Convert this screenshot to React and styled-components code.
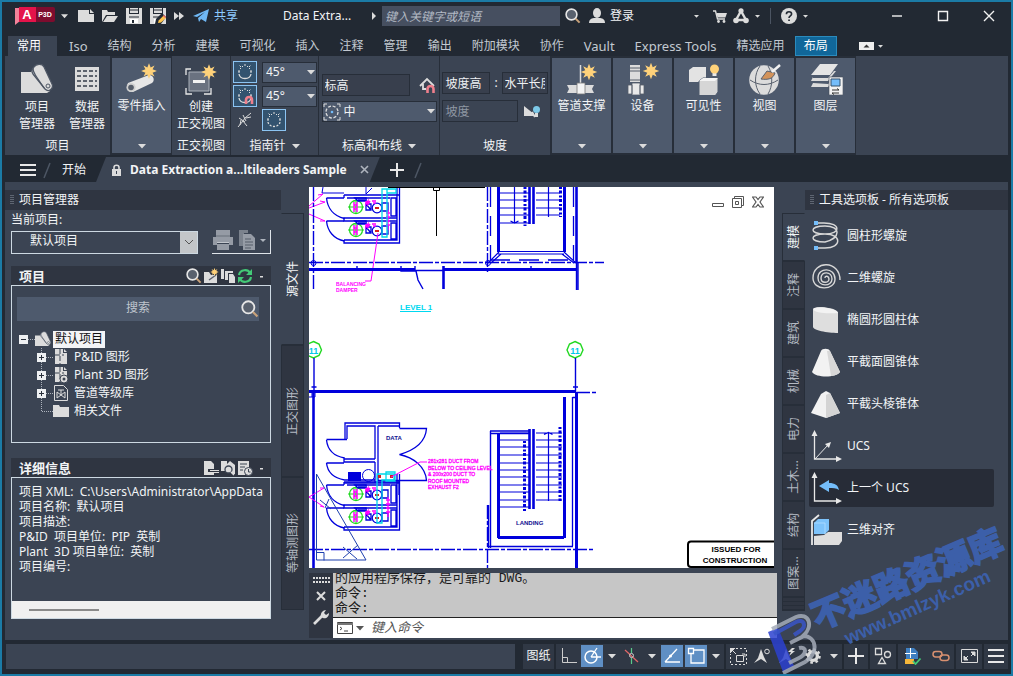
import React from 'react';
import styled, { createGlobalStyle, css } from 'styled-components';

const c = {
  edge: '#1b7ba6',
  dark: '#222933',
  panel: '#3b4453',
  head: '#2f3541',
  light: '#4e5a6d',
  line: '#272e39',
  text: '#f2f4f6',
  dim: '#c3c9d1',
  frame: '#cdd9e2',
  blue: '#5f8fc4',
};

const GlobalStyle = createGlobalStyle`
  * { box-sizing: border-box; }
  body {
    margin: 0;
    background: ${c.dark};
    color: ${c.text};
    font: 12px/16px 'Noto Sans', 'Noto Sans CJK SC', sans-serif;
  }
  button, input, select { font: inherit; color: inherit; margin: 0; border-radius: 0; }
  ul { list-style: none; margin: 0; padding: 0; }
  svg { display: block; flex: none; }
`;

const Frame = styled.div`
  position: relative;
  display: flex;
  flex-direction: column;
  min-height: 100vh;
  padding: 0 3px;
  border: 2px solid ${c.edge};
  overflow: hidden;
`;

const PlainButton = styled.button`
  display: flex;
  align-items: center;
  justify-content: center;
  flex: none;
  padding: 0;
  border: 0;
  background: none;
  white-space: nowrap;
  cursor: pointer;
`;

/* ---------- title bar ---------- */
const TitleBar = styled.header`
  display: flex;
  align-items: center;
  height: 34px;
  padding: 0 13px 6px 10px;
`;
const QuickTools = styled.div`
  display: flex;
  align-items: center;
  gap: 8px;
`;
const LogoButton = styled(PlainButton)`
  gap: 6px;
  margin-right: 10px;
`;
const ShareButton = styled(PlainButton)`
  gap: 5px;
  margin-left: 9px;
  color: #8ecbff;
`;
const FileName = styled.span`
  width: 89px;
  margin-left: 45px;
  white-space: nowrap;
`;
const TitleSearch = styled.input`
  flex: 0 1 178px;
  min-width: 60px;
  height: 20px;
  margin: 0 5px;
  padding: 0 3px;
  border: 0;
  background: #464f60;
  &::placeholder { color: #b3bac5; opacity: 1; font-style: italic; }
`;
const LoginButton = styled(PlainButton)`
  gap: 5px;
  margin-left: 8px;
`;
const TitleEnd = styled.div`
  display: flex;
  align-items: center;
  flex: 1;
  gap: 6px;
  padding-left: 60px;
`;
const TitleRule = styled.span`
  width: 1px;
  height: 16px;
  margin: 0 4px;
  background: #4b5462;
`;
const WindowButtons = styled.div`
  display: flex;
  gap: 34px;
  margin-left: auto;
`;

/* ---------- ribbon tabs ---------- */
const RibbonTabs = styled.nav`
  display: flex;
  height: 20px;
  padding-left: 3px;
`;
const RibbonTab = styled(PlainButton)`
  padding: 0 10px;
  color: ${c.dim};
  ${(p) => p.$latin && css`font-size: 13px;`}
  ${(p) => p.$kind === 'current' && css`
    margin-right: 2px;
    padding: 0 16px 0 9px;
    color: #fff;
    background: ${c.panel};
  `}
  ${(p) => p.$kind === 'accent' && css`
    margin-right: 22px;
    padding: 0 8px;
    color: #fff;
    background: #11679a;
    border: 1px solid #2b8bbd;
  `}
`;
const CollapseButton = styled(PlainButton)`gap: 4px;`;

/* ---------- ribbon ---------- */
const Ribbon = styled.section`
  display: flex;
  height: 99px;
  background: ${c.panel};
`;
const Panel = styled.section`
  display: flex;
  flex-direction: column;
  flex: none;
  width: ${(p) => p.$width}px;
  border-right: 1px solid ${c.line};
`;
const PanelBody = styled.div`
  display: flex;
  flex: 1;
  justify-content: center;
  gap: ${(p) => p.$gap || 0}px;
  padding: ${(p) => p.$pad || '7px 0 0'};
`;
const PanelTitle = styled.h2`
  display: flex;
  align-items: center;
  justify-content: center;
  gap: 6px;
  height: 18px;
  margin: 0;
  font-size: 12px;
  font-weight: 400;
`;
const BigButton = styled(PlainButton)`
  flex-direction: column;
  justify-content: flex-start;
  line-height: 17px;
  svg { margin-bottom: 3px; }
`;
const SlidePanel = styled(PlainButton)`
  flex-direction: column;
  justify-content: flex-start;
  width: 61px;
  padding: 5px 0 4px;
  background: ${c.light};
  border: 1px solid ${c.line};
  border-width: 2px 1px;
  span { flex: 1; padding-top: 3px; }
`;
const Stack = styled.div`
  display: flex;
  flex-direction: column;
  gap: ${(p) => p.$gap || 0}px;
  padding: ${(p) => p.$pad || '0'};
`;
const FieldRow = styled.div`
  display: flex;
  align-items: center;
  gap: ${(p) => p.$gap || 0}px;
`;
const ToggleButton = styled(PlainButton)`
  width: 24px;
  height: 22px;
  ${(p) => p.$on && css`
    background: #33536f;
    border: 1px solid #8cc4f2;
  `}
`;
const PickerBox = styled.span`
  position: relative;
  display: flex;
  align-items: center;
  width: ${(p) => p.$width}px;
  height: 21px;
  background: ${c.light};
  border: 1px solid ${c.line};
  > svg:last-child { position: absolute; right: 1px; pointer-events: none; }
`;
const PickerSelect = styled.select`
  flex: 1;
  min-width: 0;
  height: 100%;
  padding: 0 3px;
  border: 0;
  background: transparent;
  appearance: none;
  option { color: #000; }
`;
const RibbonInput = styled.input`
  width: ${(p) => p.$width}px;
  height: 22px;
  padding: 0 2px;
  border: 1px solid ${c.line};
  background: #383f4d;
  &::placeholder { color: #eef0f3; opacity: 1; }
  &:disabled { background: ${c.panel}; }
  &:disabled::placeholder { color: #8f97a3; }
`;

/* ---------- document tabs ---------- */
const DocTabs = styled.nav`
  display: flex;
  align-items: center;
  height: 27px;
  padding: 2px 0 0 15px;
`;
const StartTab = styled(PlainButton)`margin: 0 10px 0 8px;`;
const ActiveDoc = styled.div`
  display: flex;
  align-items: center;
  align-self: stretch;
  gap: 9px;
  padding: 0 11px 0 16px;
  margin-right: 10px;
  background: ${c.panel};
  font-weight: 700;
  white-space: nowrap;
  clip-path: polygon(10px 0, 100% 0, calc(100% - 10px) 100%, 0 100%);
  button { margin-left: 4px; }
`;
const NewDoc = styled(PlainButton)`margin-right: 9px;`;

/* ---------- workspace ---------- */
const Workspace = styled.main`
  display: grid;
  grid-template-columns: 276px 23px minmax(0, 1fr) 23px 203px;
  flex: 1;
  background: ${c.panel};
`;
const Palette = styled.aside`
  display: flex;
  flex-direction: column;
  min-width: 0;
  padding-top: 8px;
`;
const PaletteTitle = styled.h2`
  display: flex;
  align-items: center;
  gap: 5px;
  height: 20px;
  margin: 0;
  padding-left: 5px;
  font-size: 12px;
  font-weight: 400;
  background: ${c.head};
`;
const ManagerBody = styled.div`
  display: flex;
  flex-direction: column;
  padding: 1px 10px 0 6px;
`;
const ManagerLabel = styled.label`line-height: 18px;`;
const ManagerRow = styled.div`
  display: flex;
  align-items: flex-start;
  gap: 14px;
  padding-top: 1px;
  margin-bottom: 12px;
`;
const ProjectBox = styled.span`
  display: flex;
  flex: 1;
  height: 23px;
  margin-top: 1px;
  border: 1px solid ${c.frame};
`;
const ProjectSelect = styled.select`
  flex: 1;
  padding: 0 0 3px 18px;
  border: 0;
  background: transparent;
  appearance: none;
  option { color: #000; }
`;
const SelectEnd = styled.span`
  display: flex;
  align-items: center;
  justify-content: center;
  width: 17px;
  background: #c3c6c9;
`;
const PrintTools = styled.div`
  display: flex;
  align-items: flex-start;
  gap: 4px;
  width: 59px;
  height: 24px;
  border: solid #dfe5ea;
  border-width: 0 1px 1px 0;
`;
const SectionHead = styled.header`
  display: flex;
  align-items: center;
  gap: 1px;
  height: 19px;
  padding: 0 3px 0 8px;
  background: ${c.head};
`;
const SectionName = styled.h3`
  flex: 1;
  margin: 0;
  font-size: 13px;
  line-height: 18px;
  font-weight: 700;
`;
const TreeBox = styled.div`
  height: 158px;
  margin-bottom: 15px;
  padding: 11px 11px 0 5px;
  border: 1px solid ${c.frame};
`;
const TreeSearch = styled.div`
  display: flex;
  align-items: center;
  height: 24px;
  margin-bottom: 9px;
  background: ${c.light};
  input {
    flex: 1;
    min-width: 0;
    height: 100%;
    padding: 0 0 4px 18px;
    border: 0;
    background: none;
    text-align: center;
  }
  input::placeholder { color: #bfc5ce; opacity: 1; }
`;
const TreeRow = styled.li`
  display: flex;
  align-items: center;
  height: 18px;
  padding-left: ${(p) => (p.$child ? 18 : 0)}px;
`;
const TreeLabel = styled(PlainButton)`
  height: 17px;
  margin-left: ${(p) => (p.$selected ? 2 : 3)}px;
  padding: 0 2px;
  ${(p) => p.$selected && css`background: #f3f4f6; color: #111;`}
`;
const DetailBox = styled.div`
  display: flex;
  flex-direction: column;
  height: 142px;
  border: 1px solid ${c.frame};
  overflow: hidden;
`;
const DetailText = styled.ul`
  flex: 1;
  padding: 6px 0 0 7px;
  line-height: 15px;
  white-space: pre;
`;
const ScrollTrack = styled.div`
  height: 17px;
  padding: 8px 0 0 17px;
  background: #f0f0f0;
`;
const ScrollThumb = styled.div`
  width: 70px;
  height: 2px;
  background: #8a8a8a;
`;

/* ---------- side tabs ---------- */
const SideTabs = styled.div`
  display: flex;
  flex-direction: column;
  padding-top: 31px;
`;
const SideTab = styled(PlainButton)`
  height: ${(p) => p.$size}px;
  color: ${(p) => (p.$on ? c.text : '#b4bac3')};
  background: ${(p) => (p.$on ? c.panel : c.head)};
  border: 1px solid ${c.line};
  ${(p) => (p.$on && !p.$left) && css`border-right-color: ${c.panel};`}
  ${(p) => (p.$on && p.$left) && css`border-left-color: ${c.panel};`}
  span {
    writing-mode: vertical-rl;
    text-orientation: sideways;
    transform: rotate(180deg);
  }
`;
const TabStack = styled.div`
  height: 14px;
  border: 1px solid ${c.line};
  background: repeating-linear-gradient(${c.head} 0 3px, ${c.line} 3px 4px);
`;

/* ---------- drawing area ---------- */
const Centre = styled.section`
  display: flex;
  flex-direction: column;
  min-width: 0;
  padding: 5px 5px 2px;
`;
const Canvas = styled.div`
  position: relative;
  flex: 1;
  margin: 0 3px 5px 0;
  background: #fff;
  > svg { width: 100%; }
`;
const CanvasButtons = styled.div`
  position: absolute;
  top: 9px;
  right: 10px;
  display: flex;
  gap: 8px;
`;
const Command = styled.div`
  display: flex;
  height: 65px;
`;
const CommandSide = styled.div`
  display: flex;
  flex-direction: column;
  align-items: center;
  gap: 8px;
  width: 24px;
  padding-top: 4px;
  background: ${c.head};
`;
const CommandMain = styled.div`
  display: flex;
  flex-direction: column;
  flex: 1;
  min-width: 0;
  color: #1a1a1a;
  font: 13px/15px 'Liberation Mono', 'Noto Sans CJK SC', monospace;
`;
const CommandLog = styled.ul`
  display: flex;
  flex-direction: column;
  justify-content: flex-end;
  flex: 1;
  padding: 0 2px 1px;
  background: #c6c6c6;
  border-bottom: 1px solid #222;
  overflow: hidden;
`;
const CommandLine = styled.label`
  display: flex;
  align-items: center;
  gap: 3px;
  height: 20px;
  padding-left: 4px;
  background: #fff;
  input {
    flex: 1;
    height: 100%;
    padding: 0 4px;
    border: 0;
    background: none;
    outline: 0;
  }
  input::placeholder { color: #555; opacity: 1; font-style: italic; }
`;

/* ---------- tool palette ---------- */
const ToolList = styled.ul`
  padding: 7px 14px 0 4px;
`;
const ToolButton = styled(PlainButton)`
  justify-content: flex-start;
  gap: 6px;
  width: 100%;
  height: 38px;
  margin-bottom: 4px;
  padding-left: 2px;
  background: ${(p) => (p.$on ? '#272c37' : 'none')};
  border-radius: 2px;
`;
const ToolIcon = styled.span`
  display: flex;
  flex: none;
  width: 30px;
`;

/* ---------- status bar ---------- */
const StatusBar = styled.footer`
  display: flex;
  align-items: center;
  gap: 2px;
  height: 34px;
  padding: 0 0 2px 1px;
`;
const StatusSpace = styled.div`
  flex: 1;
  height: 25px;
  margin-right: 6px;
  background: ${c.panel};
`;
const StatusGroup = styled.div`
  display: flex;
  align-items: center;
  height: 25px;
  background: #303845;
`;
const StatusButton = styled(PlainButton)`
  width: ${(p) => p.$width || 24}px;
  height: 22px;
  background: ${(p) => (p.$on ? c.blue : 'none')};
  ${(p) => p.$on && css`margin: 0 1px;`}
`;

const Watermark = styled.div`
  position: absolute;
  right: 0;
  bottom: -2px;
  pointer-events: none;
`;

/* ---------- icons ---------- */
const G = '#dcdcdc';
const Svg = ({ w = 16, h = w, vb, children }) => (
  <svg width={w} height={h} viewBox={vb || `0 0 ${w} ${h}`} fill="none" aria-hidden="true">{children}</svg>
);
const Caret = ({ color = G, w = 8 }) => (
  <Svg w={w} h={5} vb="0 0 8 5"><path d="M0 0h8L4 4.6z" fill={color} /></Svg>
);
const Star = ({ x, y, s = 1 }) => (
  <g transform={`translate(${x} ${y}) scale(${s})`}>
    <path d="M0-7.5 1.6-3.4 5.3-5.3 3.4-1.6 7.5 0 3.4 1.6 5.3 5.3 1.6 3.4 0 7.5-1.6 3.4-5.3 5.3-3.4 1.6-7.5 0-3.4-1.6-5.3-5.3-1.6-3.4z" fill="#ffd27a" />
  </g>
);
const Lens = ({ size = 16 }) => (
  <Svg w={size} vb="0 0 16 16">
    <circle cx="6.5" cy="6.5" r="5.4" stroke="#e6e6e6" strokeWidth="1.6" fill="#59616e" />
    <path d="m10.6 10.6 4 4" stroke="#c9a27a" strokeWidth="2" />
  </Svg>
);
const Logo = () => (
  <Svg w={40} h={18}>
    <path d="M0 1h5v13L0 18z" fill="#f2839a" />
    <path d="M4 0h17v15H4z" fill="#e4134a" />
    <path d="M21 0h17a2 2 0 0 1 2 2v11a2 2 0 0 1-2 2H21z" fill="#7d0c2e" />
    <text x="12" y="12" fill="#fff" fontFamily="Liberation Sans, sans-serif" fontSize="13" fontWeight="700" textAnchor="middle">A</text>
    <text x="30" y="10" fill="#fff" fontFamily="Liberation Sans, sans-serif" fontSize="7" fontWeight="700" textAnchor="middle">P3D</text>
  </Svg>
);
const FileNew = () => <Svg><path d="M0 2h11v4h5v8H0zM12 1l4 4h-4z" fill={G} /></Svg>;
const FolderOpen = () => <Svg><path d="M0 14V2h5l1 2h7v3H4z" fill={G} /><path d="M5 8h11l-4 6H1z" fill={G} /></Svg>;
const Save = ({ edit }) => (
  <Svg>
    <path d="M0 0h3v6h10V0h3v16H0z" fill={G} /><path d="M4 0h8v5H4z" fill={G} />
    <path d="M4 2h8M3 9h10" stroke="#222933" /><path d="M4 11h8v4H4z" fill="#fff" /><path d="M6 12h2v3H6z" fill="#222933" />
    {edit && <g><path d="m5 16 1-5 6-6 4 4-5 7z" fill="#222933" /><path d="m8 15 .6-2.4 5-5L16 10l-5 4.4z" fill="#ffc44d" /><path d="m13 8 1-1 2 2-1 1z" fill="#f06a6a" /></g>}
  </Svg>
);
const MoreTools = () => <Svg w={10} h={8}><path d="M0 0l5 4-5 4zM5 0l5 4-5 4z" fill={G} /></Svg>;
const Plane = () => <Svg><path d="M0 8 16 1l-3 13-5-3-2 3-1-4 7-6-8 5z" fill="#6fb8f5" /></Svg>;
const User = () => <Svg><ellipse cx="8" cy="5" rx="4" ry="5" fill={G} /><path d="M0 15c0-4 3-5 6-5h4c3 0 6 1 6 5z" fill={G} /></Svg>;
const Cart = () => (
  <Svg w={14}><path d="M0 2h2.5l2 8H12" stroke={G} strokeWidth="1.4" /><path d="M3.4 4H14l-1.6 4.6H4.6z" fill={G} /><circle cx="5.5" cy="12.5" r="1.4" fill={G} /><circle cx="11" cy="12.5" r="1.4" fill={G} /></Svg>
);
const AppStore = () => <Svg><path d="M8 3 3 12h10z" stroke={G} strokeWidth="2.4" /><circle cx="8" cy="2.8" r="2.6" fill={G} /><circle cx="3" cy="12.5" r="2.8" fill={G} /><circle cx="13" cy="12.5" r="2.8" fill={G} /></Svg>;
const Help = () => (
  <Svg><circle cx="8" cy="8" r="8" fill={G} /><path d="M5.4 6.2c0-3.4 5.2-3.2 5.2-.2 0 1.8-2.6 2-2.6 4" stroke="#222933" strokeWidth="1.6" /><path d="M7.2 11.4h1.7v1.7H7.2z" fill="#222933" /></Svg>
);
const Collapse = () => <Svg w={15} h={8}><path d="M0 0h15v8H0z" fill="#eee" /><path d="m4.500 5.500 3-3 3 3z" fill="#333" /></Svg>;

const Sheets = ({ s = 32 }) => (
  <Svg w={s} vb="0 0 32 32">
    <path d="M0 9h10l4-4 15 19v4l-3 2H0z" fill={G} />
    <path d="M13 4c2-3 8-4 10 0l8 17c2 4-3 9-7 5L12 11c-2-3-1-5 1-7z" fill={G} stroke="#4d5664" strokeWidth="1.3" />
    <path d="M12 5c0 4 1 5 3 8l8 12" stroke="#4d5664" strokeWidth="1.2" /><circle cx="27" cy="23" r="2" stroke="#4d5664" />
  </Svg>
);
const DataTable = () => (
  <Svg w={26} h={32}><path d="M1 4h24v24H1z" fill={G} />{[8, 13, 18, 23].map((y) => <path key={y} d={`M3 ${y}h20`} stroke="#333b47" strokeWidth="1.3" strokeDasharray="4 2" />)}</Svg>
);
const Pipe = () => (
  <Svg w={32}><path d="m2 20 21-8c5 0 6 6 3 8L7 29c-5 1-7-5-5-9z" fill="#e6e6e6" /><circle cx="5" cy="24.500" r="4.600" fill="#cfcfcf" /><circle cx="5" cy="24.500" r="2.800" fill="#555d69" /><Star x={23} y={8} s={1.05} /></Svg>
);
const Ortho = () => (
  <Svg w={34} h={32}><path d="M2 12V6h5M22 6h4v5M2 25v6h6M20 31h7v-6" stroke="#e8e8e8" strokeWidth="1.3" /><path d="M5 9h20v19H5z" fill="#6a7280" stroke="#aab0b9" /><path d="M9 17h12v3H9z" fill="#f2f2f2" /><Star x={25} y={9} s={1.05} /></Svg>
);
const Support = () => (
  <Svg w={34} h={32}><path d="M15.500 2v18" stroke={G} strokeWidth="1.500" /><path d="M2 22h27l-2 4 2 4H2l2-4z" fill={G} /><path d="M12 20h8v11h-8z" fill="#f3f3f3" stroke="#777" strokeWidth=".8" /><Star x={24} y={9} s={1.1} /></Svg>
);
const Equipment = () => (
  <Svg w={34} h={32}><path d="M4 2h10v17H4z" fill={G} /><path d="M4 5h10M4 8h10M4 17h10" stroke="#555d69" /><path d="M2 22h4v9H2zM14 22h4v9h-4zM6 20h8v12H6z" fill="#e9e9e9" stroke="#555d69" strokeWidth=".8" /><Star x={25} y={8} s={1.1} /></Svg>
);
const Visibility = () => (
  <Svg w={32}><path d="m1 7 4-3h13v15H1z" fill="#e3e3e3" /><path d="m11 18 4-3h15v14l-3 4H11z" fill="#d6d6d6" stroke="#4e5a6d" /><path d="m11 18 4-3h15l-3 3z" fill="#f4f4f4" /><path d="M24.500 9.500h4V13h-4z" fill="#e8e8e8" /><circle cx="26.500" cy="6" r="4.500" fill="#ffd27a" /></Svg>
);
const Views = () => (
  <Svg w={34} h={32}><circle cx="16" cy="17" r="14.800" fill={G} /><path d="M2 17c9 6 19 6 28 0M12 3c-6 8-6 20 0 28M20 3c5 8 5 20 0 28" stroke="#59616e" /><path d="m13 16 6-8 8 2c-2 6-7 7-14 6z" fill="#d3935a" stroke="#59616e" /><path d="m24 9 8-7" stroke="#f2f2f2" strokeWidth="2.500" /></Svg>
);
const Layers = () => (
  <Svg w={34} h={32}><path d="M11 1h18l-8 11H2z" fill="#e5e5e5" /><path d="m4 14-2 4h17l8-10h-2l-6 7H4zM4 20l-2 4h17l6-7-6 4z" fill={G} /><path d="M20 14h14v18H20z" fill="#f2f2f2" stroke="#444c59" strokeWidth=".6" /><path d="M22 16h9v7h-9z" fill="#74bdfa" stroke="#34506b" /><path d="M23 27h7l-2-1.500M30 30h-7l2 1.500" stroke="#333" /></Svg>
);
const CompassDots = ({ magnet, full }) => (
  <Svg w={18}>
    <path d="M3 11c1 6 11 6 12 0" stroke={G} strokeDasharray={full ? '2 1.5' : '0'} strokeWidth="1.3" />
    <path d="M3 10V8M4 6l1-1M6 4l1-1M9 3V1M12 4l-1-1M14 6l-1-1M15 10V8M4 8H2M16 8h-2M5 4 3 2M13 4l2-2" stroke={G} strokeDasharray="2 1" />
    {magnet && <path d="M10 17v-4c0-4 6-4 6 0v4" stroke="#ef7f8c" strokeWidth="2.6" />}
  </Svg>
);
const Twigs = () => <Svg><path d="M1 15 6 9l2-3 6-5M2 6l6 4M6 3l3 6M6 9l4 5M9 6l5-1M3 13l1-5" stroke={G} /></Svg>;
const SnapHouse = () => <Svg><path d="M1 9l7-7 7 7M4 7v5h3" stroke={G} strokeWidth="1.8" /><path d="M8.500 16v-4c0-4 6-4 6 0v4" stroke="#ef7f8c" strokeWidth="2.600" /></Svg>;
const CentreDot = () => <Svg w={18}><path d="M1 4V1h3M14 1h3v3M17 14v3h-3M4 17H1v-3" stroke={G} /><circle cx="9" cy="9" r="6" stroke={G} strokeWidth="1.3" strokeDasharray="3 1.700" /><circle cx="9" cy="9" r="1.300" fill="#74bdfa" /></Svg>;
const Slope = () => <Svg><path d="M0 3l10 8v2H0zM1 10h6" fill={G} /><path d="m8 9 3 5" stroke={G} strokeWidth="2" /><circle cx="12.500" cy="6.500" r="3.500" fill="#7cc9e8" /><path d="M11 10h3v4h-3z" fill={G} /></Svg>;

const Menu = ({ w = 16, h = 12 }) => <Svg w={w} h={h}><path d={`M0 1h${w}M0 ${h / 2}h${w}M0 ${h - 1}h${w}`} stroke="#e8e8e8" strokeWidth="2" /></Svg>;
const Slash = () => <Svg w={12} h={20}><path d="m2 18 6-15" stroke="#4d5664" strokeWidth="1.500" /></Svg>;
const Lock = () => <Svg w={9} h={12}><path d="M0 5h9v7H0z" fill={G} /><path d="M2 6V3.500c0-3 5-3 5 0V6" stroke={G} strokeWidth="1.600" /><path d="M4 7h1v3H4z" fill="#3b4453" /></Svg>;
const Cross = ({ s = 9, color = '#aeb4bd', sw = 1.6 }) => <Svg w={s}><path d={`M1 1l${s - 2} ${s - 2}M${s - 1} 1 1 ${s - 1}`} stroke={color} strokeWidth={sw} /></Svg>;
const Plus = ({ s = 14 }) => <Svg w={s}><path d={`M${s / 2} 0v${s}M0 ${s / 2}h${s}`} stroke="#e8e8e8" strokeWidth="2" /></Svg>;
const Grip = () => <Svg w={4} h={10}><path d="M1 0v10M3 0v10" stroke="#8f97a3" strokeDasharray="1 1" /></Svg>;
const Printer = () => <Svg w={22} h={20}><path d="M4 0h14v5H4zM1 7h20v8h-4v-3H5v3H1zM5 14h12v6H5z" fill="#959ba5" /><path d="M4 6h14M5 12.500h12" stroke="#c2c6cc" /></Svg>;
const Copies = () => <Svg w={18} h={20}><path d="M1 0h9v3H6v13H1z" fill="#7b828d" /><path d="M5 4h8l4 4v12H5z" fill="#969ca6" /><path d="M7 9h6M7 12h8M7 15h8M7 18h6" stroke="#555d69" /></Svg>;
const FolderStar = () => <Svg><path d="M1 4h5l2 3h6v8H1z" fill={G} /><path d="m6 12 7-5" stroke="#59616e" strokeWidth="1.500" /><Star x={11.5} y={4} s={0.55} /></Svg>;
const PagesIcon = () => <Svg><path d="M1 1h3v10H1zM5 3h8v2H8v7H5z" fill={G} /><path d="M9 6h4l2 3v6H9z" fill={G} /></Svg>;
const Refresh = () => <Svg><path d="M2 7c1-6 9-6 11-2M14 9c-1 6-9 6-11 2" stroke="#43c977" strokeWidth="2.200" /><path d="m15 1v6h-6zM1 15V9h6z" fill="#43c977" /></Svg>;
const Dot = () => <Svg w={14}><path d="M6 7h3v1.500H6z" fill={G} /></Svg>;
const FileExport = () => <Svg><path d="M1 1h7l3 3v5H5v3h6v3H1z" fill={G} /><path d="M7 10.500h9M7 12.500h9" stroke={G} /></Svg>;
const FileFind = () => <Svg><path d="M1 1h6v3l3-3 5 4v9h-2l-3-3-3 1-1-1H1z" fill={G} /><circle cx="8.500" cy="9.500" r="3.500" fill={G} stroke="#3b4453" strokeWidth="1.300" /><path d="m11 12 3 3" stroke={G} strokeWidth="1.500" /></Svg>;
const FileClock = () => <Svg><path d="M1 1h11v7L8 15H1z" fill={G} /><path d="M3 4h7M3 7h5M3 10h3" stroke="#3b4453" /><circle cx="11.500" cy="11.500" r="4" fill={G} stroke="#3b4453" /><path d="M11.500 9v3h2" stroke="#3b4453" /></Svg>;
const Expander = ({ open }) => (
  <Svg w={18}>
    <path d="M11 9.500h7" stroke="#aeb4bd" strokeDasharray="1 1" />
    {!open && <path d="M6.500 0v18" stroke="#aeb4bd" strokeDasharray="1 1" />}
    <path d="M2 5h9v9H2z" fill="#eef0f2" /><path d="M4 9.500h5" stroke="#29303b" />{!open && <path d="M6.500 7v5" stroke="#29303b" />}
  </Svg>
);
const Branch = () => <Svg w={18}><path d="M6.500 0v9.500H18" stroke="#aeb4bd" strokeDasharray="1 1" /></Svg>;
const DwgFile = ({ gear }) => <Svg><path d="M2 0h8v4h4v11H2zM11 0l3 3h-3z" fill={G} /><path d="M7 0v15M2 6h9" stroke="#3b4453" strokeDasharray="5 2" />{gear && <g><circle cx="11" cy="12" r="4" fill={G} stroke="#3b4453" /><circle cx="11" cy="12" r="1.500" fill="#3b4453" /></g>}</Svg>;
const SpecFile = () => <Svg><path d="M1.500.5h9l4 4v11h-13z" stroke={G} /><path d="m4 7 8 6V7l-8 6zM8 5v5M5 5h6" stroke={G} /></Svg>;
const Folder = () => <Svg><path d="M0 2h6l1 2h9v10H0z" fill={G} /></Svg>;

const Helix = () => (
  <Svg w={29} h={30}>
    <path d="M5 2h8c17 0 17 11 1 11C-2 13-2 5 14 5c16 0 16 12 0 16-16 0-16-8 0-8 17 0 17 14 0 14H5" stroke="#d8d8d8" strokeWidth="1.400" />
    <path d="M3 0h4v4H3zM3 25h4v4H3z" fill="#74bdfa" />
  </Svg>
);
const Spiral = () => <Svg w={30} h={30}><path d="M14 15c0-3 4-2 4 1 0 4-8 5-8-1 0-7 11-7 11 1 0 8-14 8-14-1C7 4 24 4 24 16c0 12-22 12-22-1C2-3 29-3 29 17" stroke="#d8d8d8" strokeWidth="1.400" /></Svg>;
const EllCylinder = () => <Svg w={29} h={30}><path d="M2 5c0-5 25-3 25 3v20C16 28 2 25 2 22z" fill="#dedede" /><path d="M2 4c1-4 25-1 25 4C16 9 3 8 2 4z" fill="#f3f3f3" /></Svg>;
const Cone = () => <Svg w={29} h={30}><path d="M10 4c1-3 8-3 9 0l10 21c-4 6-24 6-28 0z" fill="#f2f2f2" /><path d="M16 4h3l10 21c-2 3-5 3-9 4z" fill="#d8d8d8" /></Svg>;
const Pyramid = () => <Svg w={29} h={30}><path d="m10 5 5-3 4 2 10 20-14 5L0 24z" fill="#f2f2f2" /><path d="m15 6 4-2 10 20-14 5z" fill="#d4d4d4" /></Svg>;
const Ucs = ({ prev }) => (
  <Svg w={31} h={32}><path d="M3.500 3v26H29" stroke="#e8e8e8" strokeWidth="1.300" /><path d="m.5 6 3-6 3 6zM25 26l6 3-6 3z" fill="#e8e8e8" />
    {prev ? <path d="m8 14 10-6v3c6 0 9 2 10 7-3-2-6-2-10-2v4z" fill="#74bdfa" /> : <g><path d="M4 29 17 15" stroke="#e8e8e8" /><path d="m20 12-2 6-4-4z" fill="#e8e8e8" /></g>}
  </Svg>
);
const Align3d = () => <Svg w={31} h={32}><path d="M1 31V7l7-6" stroke="#e8e8e8" strokeWidth="1.800" /><path d="m3 9 4-4h11v11l-4 4H3z" fill="#7dc3fb" /><path d="M3 9h11v11" stroke="#a9d8ff" /><path d="m3 22 10-1 4-3h14v9l-3 4H3z" fill="#dedede" /></Svg>;

const Wrench = () => <Svg><path d="m1 15 8-8" stroke={G} strokeWidth="2.600" /><path d="M8 8c-1-4 2-7 5-7l-2 3 2 2 3-2c0 4-3 6-6 5z" fill={G} /></Svg>;
const Prompt = () => <Svg w={16} h={12}><path d="M.5.5h15v11H.5z" stroke="#444" /><path d="M0 1h16v2H0z" fill="#777" /><path d="m3 5 2 1.500L3 8M7 9h4" stroke="#444" /></Svg>;

const OrthoL = () => <Svg w={18} h={16}><path d="M3.500 0v14.500H18M3.500 9.500h5v5" stroke="#ccc" /></Svg>;
const Polar = () => <Svg w={18}><circle cx="8" cy="10" r="6" stroke="#fff" strokeWidth="1.500" /><path d="M8 10h10M8 10l6-9" stroke="#fff" strokeWidth="1.300" /></Svg>;
const Iso = () => <Svg><path d="m1 2 13 12" stroke="#e26767" strokeWidth="1.200" /><path d="M7.500 0v5M7.500 10v6" stroke="#5ac98a" strokeWidth="1.200" /><circle cx="7.500" cy="7.500" r="2" stroke="#ccc" /></Svg>;
const Track = () => <Svg w={18}><path d="M2 15h15M2 15 14 2" stroke="#fff" strokeWidth="1.300" /><circle cx="7.500" cy="9" r="1.500" fill="#fff" /></Svg>;
const Osnap = () => <Svg w={18}><path d="M4 3h13v13H4z" stroke="#fff" strokeWidth="1.300" /><path d="M1.500 1.500h5v5h-5z" fill={c.blue} stroke="#fff" strokeWidth="1.300" /></Svg>;
const SelCycle = () => <Svg w={17}><path d="M6 .5h10.500v16H.500V6" stroke={G} strokeDasharray="2 2" /><path d="M6.500 7.500h7v6h-7z" stroke={G} /><path d="M12 6h3v3" stroke={G} /><path d="M0 0h5L0 5zM1 1l5 5" fill={G} stroke={G} /></Svg>;
const Anno = ({ bolt }) => <Svg><path d="m0 15 4-5 3-9 3 8 3 6-6-4z" fill={G} />{bolt ? <path d="m13 0-4 4h3l-2 4 6-5h-3l3-3z" fill={G} /> : <circle cx="13" cy="3.500" r="2.300" stroke={G} />}</Svg>;
const Gear = () => <Svg><circle cx="8" cy="8" r="4.400" stroke={G} strokeWidth="3.400" /><circle cx="8" cy="8" r="6.600" stroke={G} strokeWidth="2.400" strokeDasharray="2.600 2.580" /></Svg>;
const Shapes = () => <Svg w={18}><path d="M1.500 1.500h6v6h-6zM4.500 16.500l3.500-6 3.500 6z" stroke={G} strokeWidth="1.300" /><circle cx="13.500" cy="7.500" r="3" stroke={G} strokeWidth="1.300" /></Svg>;
const Hardware = () => <Svg w={18} h={17}><path d="M1 11h9v5H1z" fill="#f6b63a" /><path d="M2 0h8l4 4v7H2z" fill="#3f7fc0" /><path d="M6.500 0v10M1 5.500h11" stroke="#fff" /><path d="m9 13 2.500 3 5-5.500" stroke="#43c977" strokeWidth="1.800" /></Svg>;
const Link = () => <Svg w={18} h={12}><rect x="1" y="1.500" width="9" height="5.500" rx="2.700" stroke="#d89070" strokeWidth="1.500" /><rect x="8" y="5" width="9" height="5.500" rx="2.700" stroke="#d89070" strokeWidth="1.500" /></Svg>;
const Expand = () => <Svg w={17} h={14}><path d="M.5.500h16v13H.5z" stroke={G} /><path d="M10 3h4v4zM7 11H3V7zM12 5l-2 2M5 9l2-2" fill={G} stroke={G} /></Svg>;

/* ---------- floor plan ---------- */
const B = '#0000dc';
const M = '#ff00ff';
const cad = { fontFamily: 'Liberation Sans Narrow, Liberation Sans, sans-serif', fontWeight: 700 };
const cadThin = { fontFamily: 'Liberation Sans, sans-serif', fontWeight: 400 };

const WashRooms = () => (
  <g stroke={B} strokeWidth="1.300">
    <path d="M326.500 198H344M326.500 198c1 10 7 18 18 20.500M326.500 221H344M326.500 221c1 10 7 18 18 20" />
    <path d="M344 195h55M347 198h43M344 195v3M344 218h53v3h-53zM344 240v3h55.500V187M397 187v53H344M391 198h5v18h-5zM391 223h5v16h-5z" />
    {[207, 230].map((y) => (
      <g key={y}>
        <circle cx="356" cy={y} r="6.500" stroke="#22d822" />
        <path d={`M348 ${y}h16M356 ${y - 7}v14`} stroke="#22d822" strokeWidth="1" />
        <path d={`M355 ${y - 9}h11v3h-8zM358 ${y - 7}h7`} strokeWidth="1.500" />
        <path d={`M366 ${y - 3}h5v6h-5zM366 ${y - 3}l5 6`} />
        <circle cx="377" cy={y + 1} r="4.800" />
        <path d={`M382 ${y - 4}h6v8h-6z`} />
        <path d={`M354 ${y - 5}v10M357 ${y - 5}v10M354 ${y - 2}h3M354 ${y + 2}h3M366 ${y - 6}v3l2-3v3l2-3M372 ${y - 6}h4M373 ${y - 4}h3`} stroke={M} strokeWidth="1.500" />
        <path d={`M375 ${y}h4v2h-4z`} fill="#d02020" stroke="none" />
      </g>
    ))}
    <path d="M388 210v20M386 213h4M386 217h4M386 221h4M386 225h4" stroke={M} />
  </g>
);

const steps = (x1, x2, ys) => ys.map((y) => `M${x1} ${y}H${x2}`).join('');
const lowerYs = [433, 440, 447, 455, 463, 470, 477, 485, 492, 500, 507];
const noteLines = ['281x281 DUCT FROM', 'BELOW TO CEILING LEVEL', '& 200x200 DUCT TO', 'ROOF MOUNTED', 'EXHAUST F2'];

const FloorPlan = () => (
  <svg viewBox="309 187 465 381" preserveAspectRatio="xMinYMin meet" fill="none" role="img" aria-label="LEVEL 1">
    {/* upper floor */}
    <WashRooms />
    <path d="M382 189h5v48h-5zM382 189h14v4h-9" stroke="#00d8e8" strokeWidth="1.300" />
    <path d="M323 187l-1 6h22" stroke={B} />
    <path d="M366 187v7l6-6" stroke={B} />
    <path d="M309 206l14-12M309 208l16-6M309 214l16 7M323 194l-5 1M325 202l-5-1M325 221l-5 0M378 233l-7 48h-6" stroke={M} />
    <path d="M313.500 187v102M309 262.500h295M487.500 187v85" stroke={B} strokeWidth="1.400" strokeDasharray="14 2 4 2" />
    <path d="M309 269.500h106M443 269.500h133" stroke={B} strokeWidth="3" />
    <path d="M415 270.500h28M416 271l2 9 5 9M357 266v5M401 266v5h14v-5M531 266v5M576.500 263v27M578 263v27" stroke={B} strokeWidth="1.400" />
    <path d="M443.500 266v23" stroke={B} strokeWidth="2.600" />
    <circle cx="313.500" cy="263" r="2.500" stroke={B} /><circle cx="488" cy="263" r="2.500" stroke={B} />
    <g fill={M} fontSize="5" {...cad}><text x="336" y="286">BALANCING</text><text x="336" y="292">DAMPER</text></g>
    <text x="400" y="310" fill="#00d8f0" fontSize="8" {...cad}>LEVEL 1</text>
    <path d="M400 311.500h31" stroke="#00d8f0" />
    <path d="M388 187.500h97M433.500 187v3.500h6v-3.500M436.500 190v46" stroke="#000" />
    <path d="M498.500 187v65M564.500 187v65" stroke={B} strokeWidth="3" />
    <path d="M576.500 187v76" stroke={B} strokeWidth="2.600" />
    <path d="M490.500 187v73M573.500 187v73M490 260h82" stroke={B} strokeDasharray="20 9" strokeWidth="1.300" />
    <path d="M498 251.500h66M498 254h66M499 252l-11 11M501 254l-10 9M564 252l12 11M562 254l12 9" stroke={B} strokeWidth="1.200" />
    <path d={steps(500, 529, [193, 200, 208, 215, 223]) + steps(536, 560, [193, 200, 208, 215]) + 'M514.500 187v36l-4-2M514.500 223l4-2M548.500 187v30'} stroke={B} strokeWidth="1.200" />
    <path d="M529.500 187v37M533.500 187v37" stroke={B} strokeWidth="2.600" />
    <path d="M525 187v39M560.500 187v30" stroke={B} strokeWidth="3" strokeDasharray="2 1.500 3 2" />

    {/* grid bubbles */}
    {[313.5, 575].map((x) => (
      <g key={x}>
        <path d={`M${x} 341.500l5.500 2.500 2.500 6-2.500 5.500-5.500 2.500-5.500-2.500-2.500-5.500 2.500-6z`} stroke="#22d822" strokeWidth="1.400" />
        <text x={x} y="353.500" fill="#00c8e8" fontSize="9" textAnchor="middle" {...cad}>11</text>
        <path d={`M${x + 0.5} 358v33M${x - 2} 387h5`} stroke={B} strokeWidth="1.400" />
      </g>
    ))}

    {/* lower floor */}
    <g transform="translate(0 287)"><WashRooms /></g>
    <path d="M309 391.500h267" stroke={B} strokeWidth="3" />
    <path d="M576 392.500h20M309 549.500h286M487.500 505v63" stroke={B} strokeWidth="1.400" strokeDasharray="14 2 4 2" />
    <path d="M313.500 392v176" stroke={B} strokeWidth="2.600" />
    <path d="M312 391v6M315 391v6M309 397h6" stroke={B} />
    <path d="M576.500 392v176" stroke={B} strokeWidth="3" />
    <path d="M572.500 397v149M572.500 397.500h5" stroke={B} strokeWidth="1.300" />
    <path d="M564.500 397v141M498.500 433v105M498 537.500h66" stroke={B} strokeWidth="3" />
    <path d="M490.500 431v117M489 546.500h84M490 431h39M490 433.500h39M488.500 505v43" stroke={B} strokeWidth="1.400" />
    <path d={steps(500, 529, lowerYs) + steps(536, 562, lowerYs.slice(0, 10)) + 'M548.500 433v68M544 434.500l4.500-2 4 2'} stroke={B} strokeWidth="1.200" />
    <path d="M529.500 429v80M533.500 429v80" stroke={B} strokeWidth="2.600" />
    <path d="M524.500 441v70M560 427v74" stroke={B} strokeWidth="3" strokeDasharray="2 1.500 3 2" />
    <path d="M345 439v-16h54.500v5M347 439v-13h28v33M326.500 439.500H347M326.500 440c1 9 7 16 18 18M344 457v5h31M344 459h31M378 426v55M375 462v21M326.500 463H344M326.500 463c1 9 7 15 18 17M344 480h31M344 483h55M378 426h21M399.500 428.500h27c-1 14-13 22-27 26 14 3 26 12 27 26h-49M399 480v15" stroke={B} strokeWidth="1.300" />
    <path d="M348 472h13v9h-13z" fill={B} /><circle cx="368.500" cy="475.500" r="6" stroke={B} />
    <path d="M377 474h17v6h-12v43h-5zM386 472h9v9h-9z" stroke="#00d8e8" strokeWidth="1.300" />
    <path d="M378 475h3v3h-3zM390 475h3v3h-3z" fill="#d02020" />
    <path d="M391 477l29-15h7M309 497l15-9M309 497l15 10M324 488l-4 0M324 507l-4-1" stroke={M} />
    <g fill={M} stroke={M} strokeWidth=".3" fontSize="5" {...cadThin}>{noteLines.map((t, i) => <text key={t} x="428" y={463 + i * 6.5}>{t}</text>)}</g>
    <g fill="#101090" fontSize="6" {...cad}><text x="386" y="440">DATA</text><text x="516" y="525">LANDING</text></g>
    <path d="M316.500 474v86h49.500zM316 552.500h8v8M343 547l14 12M358 545l-15 13M320 500l11 9M329 499l-4 9" stroke="#1d3fae" />
    <rect x="688" y="541.500" width="90" height="25.500" rx="3" stroke="#000" strokeWidth="2" />
    <g fill="#000" fontSize="8" textAnchor="middle" {...cad}><text x="736" y="552">ISSUED FOR</text><text x="735" y="563">CONSTRUCTION</text></g>
  </svg>
);

const CanvasGlyph = ({ kind }) => (
  <Svg w={12} h={12}>
    {kind === 'min' && <path d="M.5 7.500h11v3H.5z" stroke="#555" />}
    {kind === 'restore' && <g stroke="#555"><path d="M2.500 2.500V.5h9v9h-2" /><path d="M.5 2.500h9v9h-9zM3.500 5.500h3v3h-3z" /></g>}
    {kind === 'close' && <path d="M.500 1h3.500l2 2.500L8 1h3.500L8 6l3.500 5H8L6 8.500 4 11H.500L4 6z" fill="#fff" stroke="#555" strokeWidth="1.200" />}
  </Svg>
);

const ribbonTabs = ['常用', 'Iso', '结构', '分析', '建模', '可视化', '插入', '注释', '管理', '输出', '附加模块', '协作', 'Vault', 'Express Tools', '精选应用', '布局'];
const slidePanels = [['管道支撑', Support], ['设备', Equipment], ['可见性', Visibility], ['视图', Views], ['图层', Layers]];
const treeItems = [['P&ID 图形', DwgFile, {}], ['Plant 3D 图形', DwgFile, { gear: true }], ['管道等级库', SpecFile, {}], ['相关文件', Folder, {}]];
const details = ['项目 XML:  C:\\Users\\Administrator\\AppData', '项目名称:  默认项目', '项目描述:', 'P&ID  项目单位:  PIP  英制', 'Plant  3D 项目单位:  英制', '项目编号:'];
const paletteTabs = ['建模', '注释', '建筑', '机械', '电力', '土木...', '结构', '图案...'];
const tools = [['圆柱形螺旋', Helix], ['二维螺旋', Spiral], ['椭圆形圆柱体', EllCylinder], ['平截面圆锥体', Cone], ['平截头棱锥体', Pyramid], ['UCS', Ucs], ['上一个 UCS', Ucs], ['三维对齐', Align3d]];

const Slide = ({ label, icon: Icon }) => (
  <SlidePanel type="button"><Icon /><span>{label}</span><Caret /></SlidePanel>
);
const Picker = ({ width, label, value, icon }) => (
  <PickerBox $width={width}>
    {icon}
    <PickerSelect aria-label={label} defaultValue={value}><option>{value}</option></PickerSelect>
    <Caret />
  </PickerBox>
);

export default function App() {
  return (
    <>
      <GlobalStyle />
      <Frame>
        <TitleBar>
          <LogoButton type="button" aria-label="应用程序菜单"><Logo /><Caret w={7} /></LogoButton>
          <QuickTools>
            <PlainButton type="button" aria-label="新建"><FileNew /></PlainButton>
            <PlainButton type="button" aria-label="打开"><FolderOpen /></PlainButton>
            <PlainButton type="button" aria-label="保存"><Save /></PlainButton>
            <PlainButton type="button" aria-label="另存为"><Save edit /></PlainButton>
            <PlainButton type="button" aria-label="更多"><MoreTools /></PlainButton>
          </QuickTools>
          <ShareButton type="button"><Plane />共享</ShareButton>
          <FileName>Data Extra...</FileName>
          <Svg w={5} h={8}><path d="M0 0l4 4-4 4z" fill={G} /></Svg>
          <TitleSearch aria-label="搜索" placeholder="键入关键字或短语" />
          <PlainButton type="button" aria-label="搜索"><Lens /></PlainButton>
          <LoginButton type="button"><User />登录</LoginButton>
          <TitleEnd>
            <Caret w={5} />
            <Svg w={2} h={4} />
            <PlainButton type="button" aria-label="购物车"><Cart /></PlainButton>
            <PlainButton type="button" aria-label="应用商店"><AppStore /></PlainButton>
            <Caret w={5} />
            <TitleRule />
            <PlainButton type="button" aria-label="帮助"><Help /></PlainButton>
            <Caret w={5} />
            <WindowButtons>
              <PlainButton type="button" aria-label="最小化"><Svg w={12} h={12}><path d="M1 6h10" stroke="#f2f2f2" strokeWidth="1.400" /></Svg></PlainButton>
              <PlainButton type="button" aria-label="最大化"><Svg w={12} h={12}><path d="M1.500 1.500h9v9h-9z" stroke="#f2f2f2" strokeWidth="1.400" /></Svg></PlainButton>
              <PlainButton type="button" aria-label="关闭"><Cross s={12} color="#f2f2f2" sw={1.4} /></PlainButton>
            </WindowButtons>
          </TitleEnd>
        </TitleBar>

        <RibbonTabs>
          {ribbonTabs.map((t, i) => (
            <RibbonTab key={t} type="button" $latin={/^[A-Z]/.test(t)} $kind={i === 0 ? 'current' : i === 15 ? 'accent' : 'plain'}>{t}</RibbonTab>
          ))}
          <CollapseButton type="button" aria-label="最小化功能区"><Collapse /><Caret w={5} /></CollapseButton>
        </RibbonTabs>

        <Ribbon>
          <Panel $width={106}>
            <PanelBody $gap={14} $pad="7px 0 0 9px">
              <BigButton type="button"><Sheets />项目<br />管理器</BigButton>
              <BigButton type="button"><DataTable />数据<br />管理器</BigButton>
            </PanelBody>
            <PanelTitle>项目</PanelTitle>
          </Panel>
          <Slide label="零件插入" icon={Pipe} />
          <Panel $width={59}>
            <PanelBody><BigButton type="button"><Ortho />创建<br />正交视图</BigButton></PanelBody>
            <PanelTitle>正交视图</PanelTitle>
          </Panel>
          <Panel $width={88}>
            <PanelBody $pad="5px 0 0">
              <Stack $gap={2} $pad="0 0 0 1px">
                <FieldRow $gap={5}><ToggleButton type="button" $on aria-label="切换指南针"><CompassDots /></ToggleButton><Picker width={55} label="角度" value="45°" /></FieldRow>
                <FieldRow $gap={5}><ToggleButton type="button" $on aria-label="切换捕捉"><CompassDots magnet /></ToggleButton><Picker width={55} label="捕捉角度" value="45°" /></FieldRow>
                <FieldRow $gap={5}><ToggleButton type="button" aria-label="公差"><Twigs /></ToggleButton><ToggleButton type="button" $on aria-label="刻度"><CompassDots full /></ToggleButton></FieldRow>
              </Stack>
            </PanelBody>
            <PanelTitle>指南针<Caret /></PanelTitle>
          </Panel>
          <Panel $width={121}>
            <PanelBody>
              <Stack $gap={5} $pad="11px 0 0">
                <FieldRow $gap={9}><RibbonInput $width={88} aria-label="标高" placeholder="标高" /><PlainButton type="button" aria-label="标高捕捉"><SnapHouse /></PlainButton></FieldRow>
                <Picker width={115} label="布线" value="中" icon={<CentreDot />} />
              </Stack>
            </PanelBody>
            <PanelTitle>标高和布线<Caret /></PanelTitle>
          </Panel>
          <Panel $width={111}>
            <PanelBody>
              <Stack $gap={6} $pad="9px 0 0">
                <FieldRow $gap={4}><RibbonInput $width={48} aria-label="坡度高" placeholder="坡度高" /><span>:</span><RibbonInput $width={46} aria-label="水平长度" placeholder="水平长度" /></FieldRow>
                <FieldRow $gap={6}><RibbonInput $width={76} aria-label="坡度" placeholder="坡度" disabled /><PlainButton type="button" aria-label="切换坡度"><Slope /></PlainButton></FieldRow>
              </Stack>
            </PanelBody>
            <PanelTitle>坡度</PanelTitle>
          </Panel>
          {slidePanels.map(([label, icon]) => <Slide key={label} label={label} icon={icon} />)}
        </Ribbon>

        <DocTabs>
          <PlainButton type="button" aria-label="菜单"><Menu /></PlainButton>
          <Svg w={6} h={4} /><Slash />
          <StartTab type="button">开始</StartTab>
          <ActiveDoc><Lock />Data Extraction a...ltileaders Sample<PlainButton type="button" aria-label="关闭"><Cross /></PlainButton></ActiveDoc>
          <NewDoc type="button" aria-label="新图形"><Plus /></NewDoc>
          <Slash />
        </DocTabs>

        <Workspace>
          <Palette>
            <PaletteTitle><Grip />项目管理器</PaletteTitle>
            <ManagerBody>
              <ManagerLabel htmlFor="project">当前项目:</ManagerLabel>
              <ManagerRow>
                <ProjectBox>
                  <ProjectSelect id="project" defaultValue="默认项目"><option>默认项目</option></ProjectSelect>
                  <SelectEnd><Svg w={8} h={5}><path d="m0 0 4 4 4-4" stroke="#555" /></Svg></SelectEnd>
                </ProjectBox>
                <PrintTools>
                  <PlainButton type="button" aria-label="打印"><Printer /></PlainButton>
                  <PlainButton type="button" aria-label="报告"><Copies /></PlainButton>
                  <PlainButton type="button" aria-label="更多报告"><Svg w={6} h={20}><path d="M0 9h6l-3 3z" fill="#aeb4bd" /></Svg></PlainButton>
                </PrintTools>
              </ManagerRow>
              <SectionHead>
                <SectionName>项目</SectionName>
                <PlainButton type="button" aria-label="查找"><Lens /></PlainButton>
                <PlainButton type="button" aria-label="新建项目"><FolderStar /></PlainButton>
                <PlainButton type="button" aria-label="复制图形"><PagesIcon /></PlainButton>
                <PlainButton type="button" aria-label="刷新"><Refresh /></PlainButton>
                <PlainButton type="button" aria-label="折叠"><Dot /></PlainButton>
              </SectionHead>
              <TreeBox>
                <TreeSearch><input aria-label="搜索" placeholder="搜索" /><Lens size={18} /></TreeSearch>
                <ul>
                  <TreeRow><Expander open /><Sheets s={16} /><TreeLabel type="button" $selected>默认项目</TreeLabel></TreeRow>
                  {treeItems.map(([label, Icon, props], i) => (
                    <TreeRow key={label} $child>{i < 3 ? <Expander /> : <Branch />}<Icon {...props} /><TreeLabel type="button">{label}</TreeLabel></TreeRow>
                  ))}
                </ul>
              </TreeBox>
              <SectionHead>
                <SectionName>详细信息</SectionName>
                <PlainButton type="button" aria-label="导出"><FileExport /></PlainButton>
                <PlainButton type="button" aria-label="预览"><FileFind /></PlainButton>
                <PlainButton type="button" aria-label="历史"><FileClock /></PlainButton>
                <PlainButton type="button" aria-label="折叠"><Dot /></PlainButton>
              </SectionHead>
              <DetailBox>
                <DetailText>{details.map((d) => <li key={d}>{d}</li>)}</DetailText>
                <ScrollTrack><ScrollThumb /></ScrollTrack>
              </DetailBox>
            </ManagerBody>
          </Palette>

          <SideTabs>
            <SideTab type="button" $size={132} $on $left><span>源文件</span></SideTab>
            <SideTab type="button" $size={132}><span>正交图形</span></SideTab>
            <SideTab type="button" $size={133}><span>等轴测图形</span></SideTab>
          </SideTabs>

          <Centre>
            <Canvas>
              <FloorPlan />
              <CanvasButtons>
                <PlainButton type="button" aria-label="最小化图形"><CanvasGlyph kind="min" /></PlainButton>
                <PlainButton type="button" aria-label="还原图形"><CanvasGlyph kind="restore" /></PlainButton>
                <PlainButton type="button" aria-label="关闭图形"><CanvasGlyph kind="close" /></PlainButton>
              </CanvasButtons>
            </Canvas>
            <Command>
              <CommandSide>
                <Svg w={17} h={6}><path d="M0 1h17M0 5h17" stroke={G} strokeWidth="2" strokeDasharray="2 1" /></Svg>
                <PlainButton type="button" aria-label="关闭命令行"><Cross s={10} color={G} sw={2} /></PlainButton>
                <PlainButton type="button" aria-label="自定义"><Wrench /></PlainButton>
              </CommandSide>
              <CommandMain>
                <CommandLog><li>的应用程序保存，是可靠的 DWG。</li><li>命令:</li><li>命令:</li></CommandLog>
                <CommandLine><Prompt /><Caret color="#555" /><input aria-label="命令" placeholder="键入命令" /></CommandLine>
              </CommandMain>
            </Command>
          </Centre>

          <SideTabs>
            {paletteTabs.map((t, i) => <SideTab key={t} type="button" $size={48} $on={i === 0}><span>{t}</span></SideTab>)}
            <TabStack />
          </SideTabs>

          <Palette>
            <PaletteTitle><Grip />工具选项板 - 所有选项板</PaletteTitle>
            <ToolList>
              {tools.map(([label, Icon], i) => (
                <li key={label}><ToolButton type="button" $on={i === 6}><ToolIcon><Icon prev={i === 6} /></ToolIcon>{label}</ToolButton></li>
              ))}
            </ToolList>
          </Palette>
        </Workspace>

        <StatusBar>
          <StatusSpace />
          <StatusGroup><StatusButton type="button" $width={31}>图纸</StatusButton></StatusGroup>
          <StatusGroup>
            <StatusButton type="button" aria-label="正交"><OrthoL /></StatusButton>
            <StatusButton type="button" $on $width={22} aria-label="极轴"><Polar /></StatusButton>
            <StatusButton type="button" $width={16} aria-label="极轴设置"><Caret /></StatusButton>
            <StatusButton type="button" aria-label="等轴测草图"><Iso /></StatusButton>
            <StatusButton type="button" $width={16} aria-label="等轴测设置"><Caret /></StatusButton>
            <StatusButton type="button" $on $width={22} aria-label="追踪"><Track /></StatusButton>
            <StatusButton type="button" $on $width={22} aria-label="对象捕捉"><Osnap /></StatusButton>
            <StatusButton type="button" $width={16} aria-label="捕捉设置"><Caret /></StatusButton>
          </StatusGroup>
          <StatusGroup>
            <StatusButton type="button" aria-label="选择循环"><SelCycle /></StatusButton>
            <StatusButton type="button" aria-label="注释可见性"><Anno /></StatusButton>
            <StatusButton type="button" $width={26} aria-label="自动缩放"><Anno bolt /></StatusButton>
            <StatusButton type="button" $width={26} aria-label="工作空间"><Gear /></StatusButton>
            <StatusButton type="button" $width={16} aria-label="工作空间设置"><Caret /></StatusButton>
          </StatusGroup>
          <StatusGroup><StatusButton type="button" aria-label="注释监视器"><Plus s={16} /></StatusButton></StatusGroup>
          <StatusGroup><StatusButton type="button" $width={26} aria-label="隔离对象"><Shapes /></StatusButton></StatusGroup>
          <StatusGroup>
            <StatusButton type="button" $width={29} aria-label="图形性能"><Hardware /></StatusButton>
            <StatusButton type="button" $width={27} aria-label="关联"><Link /></StatusButton>
          </StatusGroup>
          <StatusGroup><StatusButton type="button" $width={26} aria-label="全屏显示"><Expand /></StatusButton></StatusGroup>
          <StatusGroup><StatusButton type="button" aria-label="自定义"><Menu w={16} h={14} /></StatusButton></StatusGroup>
        </StatusBar>

        <Watermark>
          <svg width="246" height="160" viewBox="765 516 246 160" fill="none">
            <path d="m768 632 10-4 16 38-11 6z" fill="#2c41d0" fillOpacity=".85" />
            <path d="m774 634 22-12c8-4 11 4 4 9l-6 4" stroke="#3a55c8" strokeWidth="4" strokeOpacity=".85" />
            <path d="m772 629 24-12c13-5 18 9 7 19 14 0 16 18 2 26l-22 11M790 643l14-7M789 663l10-5c8-4 8-12 0-10" stroke="#a4abb8" strokeWidth="4" strokeOpacity=".85" />
            <g fill="#3c5fa9" fontWeight="700">
              <text transform="translate(818 630) rotate(-23)" fontSize="34" fontFamily="Noto Sans CJK SC, sans-serif" stroke="#3c5fa9" strokeWidth="2">不迷路资源库</text>
              <text transform="translate(848 645) rotate(-24)" fontSize="19" fontFamily="Liberation Sans, sans-serif">www.bmlzyk.com</text>
            </g>
          </svg>
        </Watermark>
      </Frame>
    </>
  );
}
